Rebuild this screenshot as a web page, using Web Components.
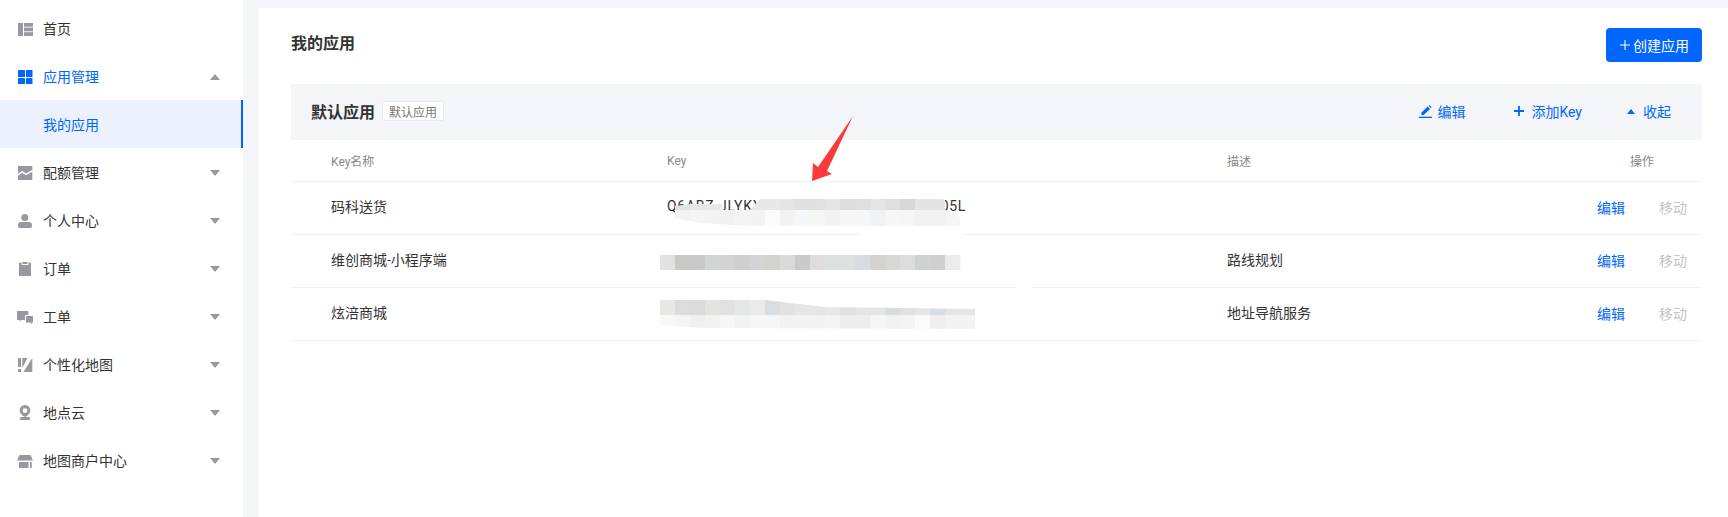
<!DOCTYPE html>
<html lang="zh-CN">
<head>
<meta charset="utf-8">
<title>我的应用</title>
<style>
html,body{margin:0;padding:0;height:100%;background:#f3f5f9;overflow:hidden}
body{font-family:Roboto,"Noto Sans CJK SC",sans-serif;color:#333;font-size:14px}
</style>
</head>
<body>
<app-page>
  <side-nav slot="nav">
    <nav-item icon="home">首页</nav-item>
    <nav-item icon="apps" caret="up" open>应用管理</nav-item>
    <nav-item sub active>我的应用</nav-item>
    <nav-item icon="quota" caret="down">配额管理</nav-item>
    <nav-item icon="user" caret="down">个人中心</nav-item>
    <nav-item icon="order" caret="down">订单</nav-item>
    <nav-item icon="ticket" caret="down">工单</nav-item>
    <nav-item icon="style" caret="down">个性化地图</nav-item>
    <nav-item icon="pin" caret="down">地点云</nav-item>
    <nav-item icon="store" caret="down">地图商户中心</nav-item>
  </side-nav>
  <main-panel heading="我的应用">
    <primary-button slot="action">创建应用</primary-button>
    <app-group name="默认应用" tag="默认应用">
      <key-row head name="Key名称" key-value="Key" desc="描述"></key-row>
      <key-row name="码科送货" key-value="Q6ABZ-JLYKX-XXXXX-XXXXX-XXXXX-XX05L"></key-row>
      <key-row name="维创商城-小程序端" desc="路线规划"></key-row>
      <key-row name="炫涪商城" desc="地址导航服务"></key-row>
    </app-group>
  </main-panel>
  <redaction-layer slot="overlay"></redaction-layer>
</app-page>

<script>
const BLUE = '#0066ff';
const ICONS = {
  home:'<rect x="1" y="3" width="5" height="13"/><rect x="7" y="3" width="9" height="3.7"/><rect x="7" y="7.6" width="9" height="3.7"/><rect x="7" y="12.2" width="9" height="3.8"/>',
  apps:'<rect x="1" y="2" width="7" height="7" rx=".6"/><rect x="9" y="2" width="6.5" height="7" rx=".6"/><rect x="1" y="10" width="7" height="6.2" rx=".6"/><rect x="9" y="10" width="6.5" height="6.2" rx=".6"/>',
  quota:'<path d="M1 2h14.3v14H1z"/><path d="M.6 11.2 5 7.8l4.2 2.6L15.8 6.4" fill="none" stroke="#fff" stroke-width="1.5"/>',
  user:'<circle cx="7.8" cy="5.6" r="3.5"/><rect x="1" y="10" width="14" height="6.8" rx="3.2"/>',
  order:'<path d="M2 3.4c0-.6.5-1 1-1h1.6V5h6.8V2.4H13c.6 0 1 .4 1 1V16H2z"/><rect x="5.6" y="2" width="4.8" height="2" />',
  ticket:'<path d="M0 3h11.3v4H8v5H4.6L2.8 13.6V12H0z"/><path d="M9 8h7v6.6h-1.2V16l-1.6-1.4H9z"/>',
  style:'<rect x="1" y="2" width="3" height="9"/><rect x="1" y="13" width="3" height="3"/><path d="M5.3 2h5.2L5.3 12z"/><path d="M15.3 2v14H6.4z"/>',
  pin:'<path fill-rule="evenodd" d="M8 1a5.4 5.4 0 0 1 5.4 5.4c0 2.7-2 4.7-5.4 6.6C4.6 11.100 2.600 9.100 2.600 6.400A5.400 5.400 0 0 1 8 1zm0 3.200a2.400 2.400 0 1 0 0 4.800 2.400 2.400 0 0 0 0-4.800z"/><rect x="2.800" y="13" width="10.400" height="3.500" rx="1.700"/>',
  store:'<path d="M2.500 3h11L16 8.500H0z"/><path d="M2 10h9.500v6H2z"/><rect x="13" y="10" width="1.800" height="6"/>'
};

function def(name, cls){ customElements.define(name, cls); }

def('app-page', class extends HTMLElement{
  connectedCallback(){
    if(this.shadowRoot) return;
    this.attachShadow({mode:'open'}).innerHTML = `
    <style>
      :host{display:flex;position:relative;width:1728px;height:517px;overflow:hidden}
      .main{flex:1;min-width:0;display:flex;padding:8px 0 0 16px}
    </style>
    <slot name="nav"></slot>
    <div class="main"><slot></slot></div>
    <slot name="overlay"></slot>`;
  }
});

def('side-nav', class extends HTMLElement{
  connectedCallback(){
    if(this.shadowRoot) return;
    this.attachShadow({mode:'open'}).innerHTML = `
    <style>:host{display:flex;flex-direction:column;width:243px;flex:none;background:#fff;padding-top:4px;box-sizing:border-box}</style>
    <slot></slot>`;
  }
});

def('nav-item', class extends HTMLElement{
  connectedCallback(){
    if(this.shadowRoot) return;
    const icon = this.getAttribute('icon');
    const caret = this.getAttribute('caret');
    const on = this.hasAttribute('open');
    const active = this.hasAttribute('active');
    this.attachShadow({mode:'open'}).innerHTML = `
    <style>
      :host{display:flex;align-items:center;height:48px;box-sizing:border-box;padding:0 23px 0 17px;font-size:14px;color:${on||active?BLUE:'#333'};background:${active?'#ebf2fe':'transparent'};${active?`box-shadow:inset -2px 0 0 ${BLUE};`:''}}
      .ico{width:16px;height:16px;flex:none;margin-right:10px;fill:${on?BLUE:'#98989f'};display:block}
      .spacer{width:26px;flex:none}
      .label{flex:1}
      .caret{width:10px;height:6px;flex:none;fill:#98989f;${caret==='up'?'':'transform:rotate(180deg);'}margin-top:1px}
    </style>
    ${icon?`<svg class="ico" viewBox="0 0 16 16">${ICONS[icon]}</svg>`:'<span class="spacer"></span>'}
    <span class="label"><slot></slot></span>
    ${caret?`<svg class="caret" viewBox="0 0 10 6"><path d="M5 0l5 6H0z"/></svg>`:''}`;
  }
});

def('main-panel', class extends HTMLElement{
  connectedCallback(){
    if(this.shadowRoot) return;
    this.attachShadow({mode:'open'}).innerHTML = `
    <style>
      :host{display:block;flex:1;min-width:0;background:#fff;padding:20px 26px 0 32px;box-sizing:border-box}
      .top{display:flex;justify-content:space-between;align-items:center;height:34px;margin-bottom:22px}
      h1{margin:0;font-size:16px;font-weight:700;color:#333;line-height:34px;padding-bottom:2px}
    </style>
    <div class="top"><h1>${this.getAttribute('heading')}</h1><slot name="action"></slot></div>
    <slot></slot>`;
  }
});

def('primary-button', class extends HTMLElement{
  connectedCallback(){
    if(this.shadowRoot) return;
    this.attachShadow({mode:'open'}).innerHTML = `
    <style>
      :host{display:flex;align-items:center;width:96px;height:34px;box-sizing:border-box;padding-left:14px;background:${BLUE};color:#fff;border-radius:4px;font-size:14px}
      svg{width:10px;height:10px;margin-right:3px;flex:none}
    </style>
    <svg viewBox="0 0 10 10"><path d="M5 0v10M0 5h10" stroke="#fff" stroke-width="1.100"/></svg><slot></slot>`;
  }
});

def('link-action', class extends HTMLElement{
  connectedCallback(){
    if(this.shadowRoot) return;
    this.attachShadow({mode:'open'}).innerHTML = `
    <style>
      :host{display:inline-flex;align-items:center;color:${BLUE};font-size:14px}
      ::slotted(svg){display:block;flex:none}
    </style>
    <slot name="icon"></slot><slot></slot>`;
  }
});

def('app-group', class extends HTMLElement{
  connectedCallback(){
    if(this.shadowRoot) return;
    this.attachShadow({mode:'open'}).innerHTML = `
    <style>
      :host{display:block}
      .band{display:flex;align-items:center;height:56px;box-sizing:border-box;background:#f3f5f9;padding:0 31px 2px 20px}
      .name{font-size:16px;font-weight:700;color:#333;margin-right:7px}
      .tag{display:inline-flex;align-items:center;justify-content:center;width:62px;height:20px;box-sizing:border-box;background:#fff;border:1px solid #e8eaef;border-radius:2px;font-size:12px;color:#777}
      .acts{margin-left:auto;display:flex;align-items:center;gap:0}
    </style>
    <div class="band">
      <span class="name">${this.getAttribute('name')}</span>
      <span class="tag">${this.getAttribute('tag')}</span>
      <div class="acts">
        <link-action style="margin-right:49px"><svg slot="icon" width="13" height="13" viewBox="0 0 13 13" style="margin-right:5px;fill:${BLUE}"><path d="M8.600 1.600 11 3.900 4.600 10H2.400V7.800z"/><path d="M9.500.7 10.400 0l2.300 2.200-.9.900z"/><rect y="11.700" width="13" height="1.300"/></svg>编辑</link-action>
        <link-action style="margin-right:45px"><svg slot="icon" width="10" height="10" viewBox="0 0 10 10" style="margin-right:7px"><path d="M5 0v10M0 5h10" stroke="${BLUE}" stroke-width="1.800"/></svg>添加Key</link-action>
        <link-action><svg slot="icon" width="8" height="5" viewBox="0 0 8 5" style="margin-right:8px;fill:${BLUE}"><path d="M4 0l4 5H0z"/></svg>收起</link-action>
      </div>
    </div>
    <slot></slot>`;
  }
});

def('key-row', class extends HTMLElement{
  connectedCallback(){
    if(this.shadowRoot) return;
    const head = this.hasAttribute('head');
    const g = n => this.getAttribute(n) || '';
    this.attachShadow({mode:'open'}).innerHTML = `
    <style>
      :host{display:grid;grid-template-columns:336px 560px 1fr auto;align-items:center;height:${head?42:53}px;box-sizing:border-box;padding:0 0 ${head?0:5}px 40px;border-bottom:1px solid #eff0f4;font-size:${head?12:14}px;color:${head?'#888':'#333'}}
      .ops{display:flex;gap:34px;padding-right:15px;padding-top:2px;font-size:14px}
      .ops a{color:${BLUE}} .ops i{font-style:normal;color:#c4c4ca}
      .op-head{padding-right:48px}
      .k{white-space:nowrap;${head?'':'letter-spacing:.72px;'}}
    </style>
    <span>${g('name')}</span><span class="k">${g('key-value')}</span><span>${g('desc')}</span>
    ${head?'<span class="op-head">操作</span>':'<span class="ops"><a>编辑</a><i>移动</i></span>'}`;
  }
});

def('redaction-layer', class extends HTMLElement{
  connectedCallback(){
    if(this.shadowRoot) return;
    const cells=(x,y,h,cols)=>cols.map((c,i)=>`<rect x="${x+i*15}" y="${y}" width="15.500" height="${h}" fill="#${c}"/>`).join('');
    const r1Top=['e2e2e2','e6e6e6','e8e8e8','e9e9e9','e9e9e9','e8e8e8','e8e8e8','e8e4e4','dfe0e2','dfe2e0','e4e5e7','e0dddf','dddfe1','e4e5e7','dedfdf','d6d7d9','e3e5e5','e3e5e4','dcdbd9'];
    const r1Low=['f2f2f2','f4f4f4','f3f3f3','f1f1f1','f4f4f4','f3f3f3','fbfbfb','f3f3f3','f5f7f8','f6f6f5','f4f3f3','f5f6f6','f6f6f6','f1f2f4','f7f7f7','f6f6f5','f2f2f2','f2f2f2','f5f5f5'];
    const r2=['e2e2e2','c9c8c6','c9c8c6','d3d4d7','d2d3d5','d0cfcd','d4d3d8','d3d2ce','dadada','cbcac9','dfdddd','dde0e0','dde0de','d9dcdf','d3d2ce','d9d7d6','dadddb','d0d1d3','cfcfcf','ebebee'];
    const r3Top=['e9e8e7','dcdcdc','dbdbdb','e3e3e1','e1e1e1','e5e6e8','ebeae8','d9dde0','e3e2e0','e6e5e8','e5e5e5','e8e8e6','e1e1e1','e5e5e5','e5e5e5','d9dcdf','e2e1df','e6e6e4','d8dde2','e3e4e6','e5e5e6'];
    const r3Low=['f8f8f7','f5f5f5','f0f0f0','f1f3f3','f7f7f5','f1f2f2','f7f7f5','f5f6f8','f2f2f2','f3f3f3','f2f2f2','f3f4f4','ededed','ededed','f7f6f5','f1f3f3','f4f4f4','fbfbfa','eeeff0','f3f3f4','f3f3f4'];
    this.attachShadow({mode:'open'}).innerHTML = `
    <style>:host{position:absolute;inset:0;display:block;pointer-events:none} svg{display:block}</style>
    <svg width="1728" height="517" viewBox="0 0 1728 517">
      <defs>
        <clipPath id="c1"><path d="M675 206 690 204 722 204 723 210 750 210 760 199 903 199 906 197 940 197 945 200 945 210 956 213 960 218 960 226 750 226 700 223 675 218Z"/></clipPath>
        <clipPath id="c3"><path d="M660 300 765 300 825 307 975 309 975 329 705 328 660 325Z"/></clipPath>
      </defs>
      <path d="M860 225H962V237H860Z" fill="#fff"/>
      <rect x="1015" y="285" width="18" height="4" fill="#fff"/>
      <g clip-path="url(#c1)">${cells(675,199,11,r1Top)}${cells(675,210,16,r1Low)}</g>
      ${cells(660,255,15,r2)}
      <g clip-path="url(#c3)">${cells(660,300,15,r3Top)}${cells(660,315,15,r3Low)}</g>
      <path d="M812 181 813 163 818 167 853 116 827 171 832 174Z" fill="#fb3a3a"/>
    </svg>`;
  }
});
</script>
</body>
</html>
